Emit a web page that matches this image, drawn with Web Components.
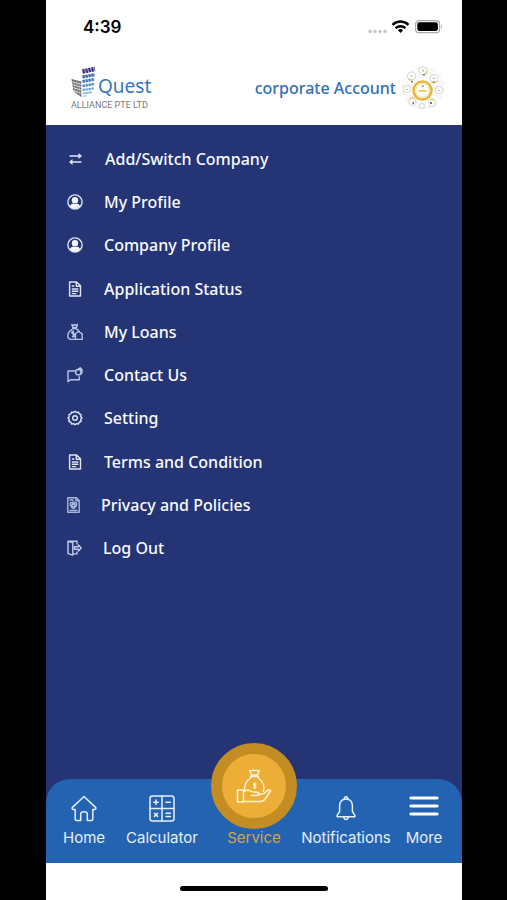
<!DOCTYPE html>
<html lang="en">
<head>
<meta charset="utf-8">
<meta name="viewport" content="width=device-width, initial-scale=1">
<title>Quest Alliance</title>
<style>
    body {
        margin: 0;
        background: #000;
        font-family: "Noto Sans", "Open Sans", sans-serif;
    }
</style>
</head>
<body>

<template id="quest-app">
    <style>
        :host {
            display: flex;
            flex-direction: column;
            min-height: 100vh;
            margin: 0 45px 0 46px;
            background: #243474;
        }
        main {
            flex: 1;
            padding: 12px 0;
        }
        footer {
            display: flex;
            justify-content: center;
            padding: 23px 0 9px;
            background: #fff;
        }
        footer span {
            width: 148px;
            height: 5px;
            border-radius: 3px;
            background: #000;
        }
    </style>
    <slot name="top"></slot>
    <main><slot></slot></main>
    <slot name="tabs"></slot>
    <footer><span></span></footer>
</template>

<template id="status-bar">
    <style>
        :host {
            display: flex;
            justify-content: space-between;
            align-items: center;
            height: 54px;
            padding: 0 19px 0 37px;
            background: #fff;
            color: #000;
            font: 600 17px/24px Inter, sans-serif;
        }
        svg { display: block; }
    </style>
    <slot></slot>
    <svg width="76" height="16" viewBox="0 0 76 16">
        <g fill="#c4c4c4">
            <circle cx="3" cy="12.500" r="1.700"/><circle cx="8" cy="12.500" r="1.700"/>
            <circle cx="13" cy="12.500" r="1.700"/><circle cx="18" cy="12.500" r="1.700"/>
        </g>
        <g fill="none" stroke="#000" stroke-width="2.4">
            <path d="M25.5 5.8a11.5 11.5 0 0 1 16 0"/>
            <path d="M28.6 9.2a7.2 7.2 0 0 1 9.8 0"/>
        </g>
        <path d="M33.5 14l-2.6-2.7a3.8 3.8 0 0 1 5.2 0z"/>
        <rect x="48.6" y="1.6" width="24" height="12" rx="3.4" fill="#fff" stroke="#aaa" stroke-width="1.2"/>
        <rect x="50.3" y="3.3" width="20.6" height="8.6" rx="1.8"/>
        <path d="M74 5.4q2 2.2 0 4.4z" fill="#aaa"/>
    </svg>
</template>

<template id="account-header">
    <style>
        :host {
            display: flex;
            box-sizing: border-box;
            justify-content: space-between;
            align-items: center;
            height: 71px;
            padding: 0 17px 3px 25px;
            background: #fff;
        }
        .brand { color: #3576bb; }
        .name {
            display: flex;
            align-items: center;
            gap: 2px;
            height: 34px;
            font-size: 19px;
            line-height: 34px;
        }
        .name span { padding-top: 8px; }
        .sub {
            color: #77777b;
            font: 9px/12px Roboto, sans-serif;
        }
        .account {
            display: flex;
            align-items: center;
            gap: 5px;
            color: #3170b9;
            font-size: 16px;
            font-weight: 500;
            text-decoration: none;
        }
        svg { display: block; }
    </style>
    <div class="brand">
        <div class="name">
            <svg width="25" height="32" viewBox="0 0 25 32">
                <g fill="none" stroke-width="3">
                    <path stroke="#3d347d" stroke-dasharray="2.4 .6" stroke-width="4.5" d="M11.500 5.500L24 3"/>
                    <path stroke="#315fa5" stroke-dasharray="2.4 .6" d="M11.500 11L23.800 8.700"/>
                    <path stroke="#3a76b9" stroke-dasharray="2.400 .6" d="M11.500 15.500L23.500 13.300"/>
                    <path stroke="#4d8cc9" stroke-dasharray="2.400 .6" d="M11.500 20L23 18" stroke-width="2.600"/>
                    <path stroke="#6ba1d4" stroke-dasharray="2.400 .6" d="M11.500 24L22.600 22.400" stroke-width="2.200"/>
                    <path stroke="#91b9df" d="M11.500 27.600L21 26.200" stroke-width="1.800"/>
                    <path stroke="#b7d0e8" d="M11.500 30.400L16 29.600" stroke-width="1.300"/>
                </g>
                <path fill="#66666a" d="M.5 13l9.800 2.500v15.700L2.300 25z"/>
                <g stroke="#fff" stroke-width=".8">
                    <path d="M0 15.500l11 3M0 18.200l11 3.200M0 21l11 3.300M0 23.600l11 4"/>
                    <path stroke-width=".3" d="M3 13l1 14M5.500 13.500l.8 15M8 14l.4 16"/>
                </g>
            </svg>
            <span>Quest</span>
        </div>
        <div class="sub">ALLIANCE PTE LTD</div>
    </div>
    <a class="account" href="#account">
        <slot></slot>
        <svg width="44" height="44" viewBox="0 0 44 44">
            <circle cx="22" cy="22" r="20.500" fill="#fafafa" stroke="#ececec" stroke-dasharray="5 3"/>
            <g fill="#fff" stroke="#dcdcda" stroke-width="1.200">
                <circle cx="10.500" cy="10" r="4"/><circle cx="22" cy="4.800" r="4"/>
                <circle cx="33" cy="12.500" r="4"/><circle cx="38" cy="24" r="3.500"/>
                <circle cx="6" cy="23" r="3.500"/><circle cx="11.500" cy="35.500" r="3.500"/>
                <circle cx="31" cy="37" r="3.500"/><circle cx="21" cy="40" r="2.500"/>
            </g>
            <g stroke="#e4cf62" stroke-width="1.500" fill="none">
                <path d="M7.500 13a4 4 0 0 0 4 .8M24 8a4 4 0 0 0 2-3M31 16a4 4 0 0 0 5-1M9 33a3.500 3.500 0 0 1 4-1M29 34a3.500 3.500 0 0 1 4 0"/>
            </g>
            <g fill="#777">
                <path d="M10 15h2v1.500h-2zM22 8h2v1.500h-2zM32 15.500h1.500v1.500H32zM11.500 36h1.500v2h-1.500zM29 36h2v2h-2z"/>
                <path fill="#bbb" d="M9 9.500h3v1H9zM21 4h2v1.500h-2zM31.500 12h3v1h-3zM5 23h2v1H5zM37 24h2v1h-2z"/>
            </g>
            <circle cx="21.500" cy="24.500" r="9" fill="#fff" stroke="#e7b83e" stroke-width="2.600"/>
            <circle cx="21.500" cy="24.500" r="6.700" fill="none" stroke="#f3dfa4"/>
            <path d="M17.500 24h8v1.700h-8z" fill="#f0c454"/>
            <path d="M21 19.500h1.500V21H21z" fill="#777"/>
        </svg>
    </a>
</template>

<template id="side-menu">
    <style>
        :host {
            display: grid;
            grid-auto-rows: 1fr;
            min-height: 433px;
        }
    </style>
    <slot></slot>
</template>

<template id="menu-item">
    <style>
        :host { display: flex; }
        a {
            flex: 1;
            display: flex;
            align-items: center;
            gap: 21px;
            padding: 0 21px;
            color: #fafbff;
            font-size: 16px;
            line-height: 24px;
            font-weight: 500;
            text-decoration: none;
        }
        svg {
            display: block;
            fill: none;
            stroke: #dfe5f6;
            stroke-width: 1.4;
            stroke-linejoin: round;
        }
    </style>
    <a><span id="icon"></span><slot></slot></a>
</template>

<template id="tab-bar">
    <style>
        :host {
            display: block;
            background: #243474;
        }
        nav {
            display: grid;
            grid-template-columns:
                minmax(0, 19fr) minmax(0, 20fr) minmax(0, 26fr)
                minmax(0, 20fr) minmax(0, 19fr);
            justify-items: center;
            height: 84px;
            border-radius: 24px 24px 0 0;
            background: #2463b2;
        }
    </style>
    <nav><slot></slot></nav>
</template>

<template id="tab-item">
    <style>
        :host {
            display: block;
            position: relative;
        }
        a {
            display: flex;
            flex-direction: column;
            align-items: center;
            gap: 5px;
            padding-top: 14px;
            color: #e6effb;
            font: 15px/20px Inter, sans-serif;
            white-space: nowrap;
            text-decoration: none;
        }
        #icon {
            display: flex;
            align-items: center;
            justify-content: center;
            height: 30px;
        }
        svg {
            display: block;
            fill: none;
            stroke: #e6effb;
            stroke-width: 1.5;
            stroke-linejoin: round;
            stroke-linecap: round;
        }
        :host([active]) a { color: #d0a550; }
        /* the round badge rises above the bar */
        :host([active]) #icon {
            position: absolute;
            top: -36px;
            left: 50%;
            box-sizing: border-box;
            width: 86px;
            height: 86px;
            margin-left: -43px;
            border: 11px solid #c38d23;
            border-radius: 50%;
            background: #edae37;
        }
        :host([active]) a { padding-top: 49px; }
        :host([active]) svg { stroke: #fff4d2; }
    </style>
    <a><span id="icon"></span><slot></slot></a>
</template>

<quest-app>
    <status-bar slot="top">4:39</status-bar>
    <account-header slot="top">corporate Account</account-header>
    <side-menu>
        <menu-item icon="swap">Add/Switch Company</menu-item>
        <menu-item icon="user">My Profile</menu-item>
        <menu-item icon="user">Company Profile</menu-item>
        <menu-item icon="file">Application Status</menu-item>
        <menu-item icon="loan">My Loans</menu-item>
        <menu-item icon="contact">Contact Us</menu-item>
        <menu-item icon="gear">Setting</menu-item>
        <menu-item icon="file">Terms and Condition</menu-item>
        <menu-item icon="privacy">Privacy and Policies</menu-item>
        <menu-item icon="logout">Log Out</menu-item>
    </side-menu>
    <tab-bar slot="tabs">
        <tab-item icon="home">Home</tab-item>
        <tab-item icon="calculator">Calculator</tab-item>
        <tab-item icon="service" active>Service</tab-item>
        <tab-item icon="bell">Notifications</tab-item>
        <tab-item icon="more">More</tab-item>
    </tab-bar>
</quest-app>

<script>
    const icons = {
        swap: `<svg width="17" height="16" viewBox="0 0 17 16"><path stroke-width="1.600" d="M2.500 5h10M4.500 11h10"/><path fill="#dfe5f6" stroke="none" d="M11.500 2l3.500 3-3.500 3zM5.500 8L2 11l3.500 3z"/></svg>`,
        user: `<svg width="16" height="16" viewBox="0 0 16 16"><circle cx="8" cy="8" r="7.100"/><circle cx="8" cy="6.300" r="3.200" fill="#f4f6fc" stroke="none"/><path fill="#f4f6fc" stroke="none" d="M2.800 12.300Q4 9.700 6 9.500q2 1.200 4 0 2 .2 3.200 2.800Q11 14.900 8 14.900t-5.200-2.600z"/></svg>`,
        file: `<svg width="16" height="16" viewBox="0 0 16 16"><path d="M2.600 1h7l3.900 3.800V15H2.600zM9.300 1v4.200h4.200M4.800 5h2.500M4.800 8h6.500M4.800 10.300h6.500M4.800 12.600h4.500"/></svg>`,
        loan: `<svg width="16" height="18" viewBox="0 0 16 18"><g stroke="#b9c4e6"><path d="M4.800 1.500l1 3h3.600l1-3-1.700.8-1.200-.8-1.200.8zM5.200 5.500h4.500M5.600 6C2.200 8 .7 10.700.8 13.200q.2 3 3 3.200h4.400M9.500 6q2 1 3 3"/><path d="M8.500 10.500l3-2 3.700 2.300v5.600H8.500zM6.800 8.500q-2-.3-2 1t2 1.500q1.600.6 1 2-.8 1.200-2.800.4M6.300 7.600v6.800"/></g></svg>`,
        contact: `<svg width="16" height="16" viewBox="0 0 16 16"><g stroke="#b9c4e6"><path d="M8.500 4H1v10.800l2.500-2h8.800V9.200"/><circle cx="11.300" cy="5.200" r="2.700"/><path d="M10.500 2.500L13.200.8l1.900 2-.3 3.700-2.200 1.300M13.200.8V3l1.900 1.200"/></g></svg>`,
        gear: `<svg width="16" height="16" viewBox="0 0 16 16"><path d="M6.500 2.500L8 1.200l1.500 1.300 2-.4.700 1.800 1.900.7-.4 2L15 8l-1.300 1.500.4 2-1.900.7-.7 1.800-2-.4L8 14.800l-1.500-1.200-2 .4-.7-1.800-1.900-.7.4-2L1 8l1.300-1.400-.4-2 1.900-.7.700-1.800z"/><circle cx="8" cy="8" r="2.300"/></svg>`,
        privacy: `<svg width="13" height="16" viewBox="0 0 13 16"><g stroke="#aab6dc"><path d="M.8.800h8.500l2.900 2.800v11.600H.8zM9 .8v3h3.200M2.500 3h4M2.500 13.400h8M6.500 4.800q1.500 1.200 3.200 1.200.2 4-3.200 5.600Q3.100 10 3.300 6q1.700 0 3.200-1.200zM5 7.600h3v2H5zM5.500 7.500V6.700h2v.8"/></g></svg>`,
        logout: `<svg width="15" height="16" viewBox="0 0 15 16"><g stroke="#c1cbea"><path d="M1 1.200h9v3.300M10 11.500v2.400H6M1 1.200l4.800 1.300v12.700L1 13.600zM7.500 6.800h4V5L14.200 8l-2.700 3V9.200h-4z"/></g></svg>`,
        home: `<svg width="26" height="27" viewBox="0 0 26 27"><path d="M13 1.500L1.200 12.600q-.5 1.600 1 1.800h2V24q0 1.600 1.500 1.600h4V19q0-2.200 3.300-2.200t3.300 2.200v6.600h4q1.500 0 1.500-1.600v-9.600h2q1.500-.2 1-1.800z"/></svg>`,
        calculator: `<svg width="26" height="27" viewBox="0 0 26 27"><rect x="1" y="1" width="24" height="25" rx="2.500"/><path d="M13 1v25M1 13.500h24M4.800 7.300h4.400M7 5.100v4.400M17 7.300h4.400M5.400 18.200l3.200 3.200M8.600 18.200l-3.200 3.200M17 18.200h4.400M17 21.400h4.400"/></svg>`,
        service: `<svg width="36" height="36" viewBox="0 0 36 36"><path d="M15.500 7l-1.800-4.500q2 .8 3.200-.5 1.600 1.300 3.200 0 1.500 1.300 3.200.5L21.500 7zM14.500 8.500h8M15 9.500c-4.700 3.600-6.500 7.500-6.300 11.500M22 9.500c5 4 7 9.500 5.300 14M25 12.500h.1"/><path d="M1.500 22h6v12h-6zM7.500 23.500c3-1.500 5-1.700 7-.4 2 1.200 4 1 6.800 1.100 2.500.2 2.300 3-.1 3.200h-5.700M21.800 26.800l6.200-1.300 4-3.300q2-.8 2.500.8l-5.800 8.500q-1.500 1.900-4.500 1.900H7.500"/><path d="M20 16q-2.500-.8-2.500.6 0 .9 1.200 1.100 1.400.3 1.200 1.300-.3 1.200-2.500.6M18.700 14.800v6" stroke-width="1.100"/></svg>`,
        bell: `<svg width="22" height="26" viewBox="0 0 22 26"><path d="M11 4C6.700 4 4.600 7.200 4.600 11v5.500L2 20.600q-.2 1.100 1 1.200h16q1.200-.1 1-1.200l-2.600-4.100V11C17.400 7.200 15.300 4 11 4zM9.500 4.200C8.500 1 13.500 1 12.500 4.200M8.700 22c.3 3.200 4.300 3.200 4.600 0"/></svg>`,
        more: `<svg width="30" height="24" viewBox="0 0 30 24"><path stroke="#fff" stroke-width="3.200" d="M2 2h26M2 10h26M2 18h26"/></svg>`
    };

    function stamp(host, id) {
        const shadowRoot = host.attachShadow({mode: 'open'});
        const template = document.querySelector('template#' + id);
        shadowRoot.appendChild(template.content.cloneNode(true));
        return shadowRoot;
    }

    // plain containers: template and slots only
    ['quest-app', 'status-bar', 'account-header', 'side-menu', 'tab-bar'].forEach(name => {
        window.customElements.define(name, class extends HTMLElement {
            constructor () {
                super();
                stamp(this, name);
            }
        });
    });

    // links with an icon picked by attribute
    ['menu-item', 'tab-item'].forEach(name => {
        window.customElements.define(name, class extends HTMLElement {
            constructor () {
                super();
                stamp(this, name);
            }
            connectedCallback () {
                const icon = this.getAttribute('icon');
                this.shadowRoot.querySelector('#icon').innerHTML = icons[icon];
                this.shadowRoot.querySelector('a').href = '#' + icon;
            }
        });
    });
</script>
</body>
</html>
